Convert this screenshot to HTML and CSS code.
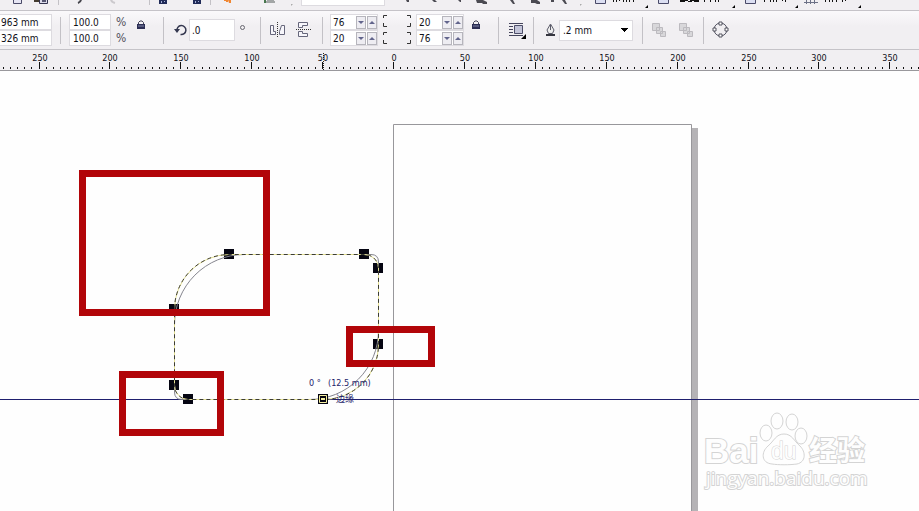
FILE: index.html
```html
<!DOCTYPE html>
<html lang="zh">
<head>
<meta charset="utf-8">
<title>Drawing</title>
<link rel="stylesheet" href="styles.css">
</head>
<body>
<div class="app">
  <div class="toolbar" role="toolbar" aria-label="Standard">
    <button aria-label="New"><svg width="12" height="10"><path d="M1.500-3V3.500H9.500V-3" fill="#e6e5f3" stroke="#4a4a68"/></svg></button>
    <button aria-label="Paste"><svg width="16" height="10"><path d="M0 0h6v2H0z" fill="#443c30"/><path d="M5.500-2V3.500H13.500V-2z" fill="#dcdbea" stroke="#353550"/><path d="M8 0h4v2H8z" fill="#555570"/></svg></button>
    <i class="rule"></i>
    <button aria-label="Undo"><svg width="12" height="10"><path d="M5-1Q5 2 2 3" fill="none" stroke="#45454c" stroke-width="2"/></svg></button>
    <button aria-label="Redo"><svg width="12" height="10"><path d="M2-1Q2 2 6 3" fill="none" stroke="#cbc9cd" stroke-width="2"/></svg></button>
    <i class="rule"></i>
    <button aria-label="Import"><svg width="10" height="10"><path d="M0 0h8v4H0z" fill="#202a58"/><path d="M2 1h1v2H2zM5 1h1v1H5z" fill="#a5b0d6"/></svg></button>
    <button aria-label="Export"><svg width="10" height="10"><path d="M0 0h8v4H0z" fill="#202a58"/><path d="M2 1h1v2H2zM5 1h1v1H5z" fill="#a5b0d6"/></svg></button>
    <i class="rule"></i>
    <button aria-label="Launch"><svg width="10" height="10"><path d="M1 0h4v2H3V1H1zM5 0h3v3H6z" fill="#f08632"/></svg></button>
    <button aria-label="Welcome"><svg width="30" height="10"><path d="M1 0h2v3H1z" fill="#47764d"/><path d="M3 2h9M4 0h7" stroke="#555d5a" fill="none"/><path d="M28 4h2l-2 2z" fill="#aaa"/></svg></button>
    <input class="zoom" aria-label="Zoom level">
    <button aria-label="Zoom in"><svg width="6" height="10"><path d="M1 0h3v2H2z" fill="#4b4a52"/></svg></button>
    <button aria-label="Zoom out"><svg width="6" height="10"><path d="M0 0h3l2 2H2z" fill="#4b4a52"/></svg></button>
    <button aria-label="Zoom selected"><svg width="6" height="10"><path d="M0 0h3v2H2z" fill="#4b4a52"/></svg></button>
    <button aria-label="Zoom objects"><svg width="13" height="10"><path d="M0 0h7l4 2v2H7L6 3H1z" fill="#4b4a52"/></svg></button>
    <button aria-label="Zoom page"><svg width="7" height="10"><path d="M0 0h3l2 4H3z" fill="#4b4a52"/></svg></button>
    <button aria-label="Zoom width"><svg width="24" height="10"><path d="M0 0h6l3 2v2H6L4 3H0zM20 0h3v2h-3z" fill="#4b4a52"/></svg></button>
    <button aria-label="Zoom height"><svg width="24" height="10"><path d="M0 0h3l2 4H3z" fill="#4b4a52"/><path d="M18 4h2l-2 2z" fill="#aaa"/></svg></button>
    <button aria-label="Snap to"><svg width="56" height="10"><path d="M.500-3V3.500H10.500V-3z" fill="#dcdff2" stroke="#4a4a68"/><path d="M18.500 0v2m3-2v2m3-2v1m4-1v2m3-2v2m3-2v2m4-2v2" stroke="#111" fill="none"/><path d="M53 5v3h-3z"/></svg></button>
    <button aria-label="Align"><svg width="80" height="10"><path d="M.500-3V3.500H10.500V-3z" fill="#dcdff2" stroke="#4a4a68"/><path d="M22 .500h8m2 0h9M22 1.500h5m3 0h4m2 0h5M46.500 0v2m6-2v2m5-2v2m3-2v2" stroke="#111" fill="none"/><path d="M77 5v3h-3z"/></svg></button>
    <button aria-label="Frame"><svg width="56" height="10"><path d="M.500-3V3.500H10.500V-3z" fill="#dcdff2" stroke="#4a4a68"/><path d="M19.500 0v2m6-2v2m3-2v2m3-2v2m6-2v1m3-1v2" stroke="#111" fill="none"/><path d="M53 5v3h-3z"/></svg></button>
    <button aria-label="Grid"><svg width="58" height="10"><path d="M0 2.500H14M2.500 0V4M6.500 0V4M10.500 0V4" fill="none" stroke="#6c7186"/><path d="M21.500 0v2m4-2v2m3-2v2m4-2v2m6-2v2m3-2v1" stroke="#111" fill="none"/><path d="M57 5v3h-3z"/></svg></button>
  </div>

  <div class="propbar" role="toolbar" aria-label="Properties">
    <div class="stack wide"><input aria-label="X position" value="963 mm"><input aria-label="Y position" value="326 mm"></div>
    <i class="rule"></i>
    <div class="stack scale"><input id="sx" value="100.0"><input id="sy" value="100.0"></div>
    <div class="stack units"><label for="sx">%</label><label for="sy">%</label></div>
    <button class="raised" aria-label="Lock ratio"><svg width="10" height="10"><path d="M2.500 5V2.500L4 1H6L7.500 2.500V5" fill="none" stroke="#414157"/><path d="M1 4h8v5H1z" fill="#2c2e55"/><path d="M2 6h6" stroke="#8186a9"/></svg></button>
    <i class="rule"></i>
    <svg width="13" height="14" aria-hidden="true"><path d="M3 8A4.500 4.500 0 1 1 6.500 11.500" fill="none" stroke="#34374f" stroke-width="1.500"/><path d="M0 6h6l-3 4z" fill="#34374f"/></svg>
    <input id="angle" class="angle" value=".0">
    <label for="angle" class="degree"><svg width="6" height="16" role="img" aria-label="degrees"><circle cx="2.500" cy="5.500" r="2" fill="none" stroke="#66666f"/></svg></label>
    <i class="rule"></i>
    <button aria-label="Mirror horizontally"><svg width="16" height="16"><path d="M.500 3.500H3.500V9.500H5.500V12.500H.500zM14.500 3.500H11.500L9.500 9.500V12.500H14.500z" fill="#f7f6fb" stroke="#66667b"/><path d="M7.500 0V16" stroke="#333" stroke-dasharray="1 1"/></svg></button>
    <button aria-label="Mirror vertically"><svg width="16" height="18"><path d="M2.500 6.500V1.500H11.500V4.500H6.500V6.500zM2.500 10.500V15.500H11.500V12.500H6.500V10.500z" fill="#f7f6fb" stroke="#66667b"/><path d="M0 8.500H16" stroke="#333" stroke-dasharray="1 1"/></svg></button>
    <i class="rule"></i>
    <div class="stack">
      <div class="spin"><input aria-label="Top left radius" value="76"><button aria-label="Decrease"></button><button class="up" aria-label="Increase"></button></div>
      <div class="spin"><input aria-label="Bottom left radius" value="20"><button aria-label="Decrease"></button><button class="up" aria-label="Increase"></button></div>
    </div>
    <svg width="29" height="32" aria-hidden="true"><path d="M4 1.500H.500V4M.500 9V12.500H4M24 1.500H27.500V4M27.500 9V12.500H24M4 18.500H.500V21M.500 26V29.500H4M24 18.500H27.500V21M27.500 26V29.500H24" fill="none" stroke="#333"/></svg>
    <div class="stack">
      <div class="spin"><input aria-label="Top right radius" value="20"><button aria-label="Decrease"></button><button class="up" aria-label="Increase"></button></div>
      <div class="spin"><input aria-label="Bottom right radius" value="76"><button aria-label="Decrease"></button><button class="up" aria-label="Increase"></button></div>
    </div>
    <button class="raised" aria-label="Edit corners together"><svg width="10" height="10"><path d="M2.500 5V2.500L4 1H6L7.500 2.500V5" fill="none" stroke="#414157"/><path d="M1 4h8v5H1z" fill="#2c2e55"/><path d="M2 6h6" stroke="#8186a9"/></svg></button>
    <i class="rule"></i>
    <button aria-label="Wrap text"><svg width="19" height="18"><path d="M1 2.500H15M1 5.500H5M1 8.500H5M1 11.500H5M1 14.500H15" stroke="#44445c"/><path d="M6.500 4.500H14.500V12.500H6.500z" fill="#c3c4d8" stroke="#4c4d68"/><path d="M18 13v5h-5z"/></svg></button>
    <i class="rule"></i>
    <svg width="9" height="14" aria-hidden="true"><path d="M4.500 1L1 7L2.500 10.500H6.500L8 7z" fill="#eee" stroke="#5b5b69"/><path d="M4.500 2V7" stroke="#5b5b69"/><path d="M0 11h9v2H0z" fill="#35353f"/></svg>
    <select class="outline" aria-label="Outline width"><option>.2 mm</option></select>
    <i class="rule"></i>
    <button aria-label="To front" disabled><svg width="16" height="15"><path d="M.500 .500H7.500V7.500H.500zM4.500 4.500H10.500V10.500H4.500zM8.500 8.500H13.500V13.500H8.500z" fill="#d8d7da" stroke="#bcbabf"/></svg></button>
    <button aria-label="To back" disabled><svg width="16" height="15"><path d="M.500 .500H7.500V7.500H.500zM8.500 8.500H13.500V13.500H8.500zM4.500 4.500H10.500V10.500H4.500z" fill="#d8d7da" stroke="#bcbabf"/></svg></button>
    <i class="rule"></i>
    <button aria-label="Convert to curves"><svg width="18" height="18"><circle cx="8.500" cy="8.500" r="6.500" fill="none" stroke="#5a5a68"/><path d="M7.500 1.500H10.500V4.500H7.500zM7.500 13.500H10.500V16.500H7.500zM1.500 7.500H4.500V10.500H1.500zM13.500 7.500H16.500V10.500H13.500z" transform="translate(-.500 -.500)" fill="#fff" stroke="#53535f"/></svg></button>
  </div>

  <svg class="ruler" id="ruler" role="img" aria-label="Horizontal ruler"><path id="ticks" stroke="#111" fill="none"/><path d="M323.500 3V20" stroke="#222" stroke-dasharray="1 1"/></svg>

  <main class="canvas">
    <svg class="drawing" role="img" aria-label="Drawing area">
      <g transform="translate(0 -71)">
        <path d="M692 128H698V2000H692z" fill="#b5b3b6"/>
        <path d="M393.500 2000V124.500H691.500V2000" fill="#fefefe" stroke="#98979b"/>
        <line x1="0" y1="399.500" x2="100%" y2="399.500" stroke="#1f1f6e"/>
        <path d="M224 249h10v10h-10zM359 249h10v10h-10zM373 263h10v10h-10zM373 339h10v10h-10zM169 304h10v10h-10zM169 380h10v10h-10zM183 394h10v10h-10z" fill="#050512"/>
        <path d="M174.500 325A70 70 0 0 1 244.500 254.500H371Q378.500 254.500 378.500 262V330A69 69 0 0 1 309 399.500H182Q174.500 399.500 174.500 392z" fill="none" stroke="#85858e"/>
        <path d="M174.500 309A55 55 0 0 1 229 254.500H364A14 14 0 0 1 378.500 268V344A55 55 0 0 1 323 399.500H188A14 14 0 0 1 174.500 385z" fill="none" stroke="#e6e294"/>
        <path d="M174.500 309A55 55 0 0 1 229 254.500H364A14 14 0 0 1 378.500 268V344A55 55 0 0 1 323 399.500H188A14 14 0 0 1 174.500 385z" fill="none" stroke="#3c3c34" stroke-dasharray="4 3"/>
        <path d="M318 394h10v10h-10z" fill="#050512"/>
        <path d="M319.500 395.500h7v7h-7z" fill="none" stroke="#f5efa0"/>
        <path d="M321 398h4v2h-4z" fill="#f5efa0"/>
        <text class="hint" x="309" y="386">0 °</text><text class="hint" x="328" y="386">(12.5 mm)</text>
        <text class="snap" x="336" y="402">边缘</text>
        <path d="M82.500 173.500H266.500V312.500H82.500zM349.500 329.500H431.500V363.500H349.500zM122.500 374.500H220.500V432.500H122.500z" fill="none" stroke="#b20509" stroke-width="7"/>
        <g class="mark">
          <text x="704" y="463" class="brand">Bai</text>
          <ellipse cx="766" cy="433" rx="6" ry="8"/><ellipse cx="777" cy="421" rx="6" ry="8"/><ellipse cx="792" cy="422" rx="6" ry="8"/><ellipse cx="801" cy="436" rx="6" ry="8"/>
          <path d="M784 434C776 434 774 441 768 446C761 452 761 463 772 464C778 465 790 465 797 464C806 462 806 452 800 446C794 441 792 434 784 434z"/>
          <text x="771" y="459" class="du">du</text>
          <text x="809" y="461" class="cjk">经验</text>
          <text x="706" y="485" class="site">jingyan.baidu.com</text>
        </g>
      </g>
    </svg>
  </main>
</div>
<script src="ruler.js"></script>
</body>
</html>
```
FILE: styles.css
```css
* { box-sizing: border-box; }

html, body { height: 100%; margin: 0; }

body, input, select, button {
  font-family: "DejaVu Sans Condensed", "DejaVu Sans", sans-serif;
  font-size: 10px;
  color: #101018;
}

.app {
  display: flex;
  flex-direction: column;
  height: 100%;
  overflow: hidden;
  background: #f1eff2;
}

button {
  display: block;
  padding: 0;
  border: 0;
  background: none;
}

svg { display: block; }

input {
  min-width: 0;
  border: 1px solid #dddbe0;
  background: #fff;
  padding: 0 3px;
  border-radius: 0;
}

.rule { width: 1px; height: 27px; background: #c3c1c6; }

.toolbar {
  display: grid;
  flex: none;
  grid-template-columns: 22px 24px 18px 33px 40px 10px 34px 17px 13px 40px 38px 104px 27px 26px 18px 34px 21px 31px 33px 63px 87px 59px auto;
  justify-items: start;
  height: 10px;
  padding-left: 12px;
  overflow: hidden;
}
.toolbar .rule { height: 5px; }
.toolbar .zoom { width: 84px; height: 6px; border-top: 0; }

.propbar {
  display: grid;
  flex: none;
  grid-template-columns: 60px 9px 47px 20px 27px 11px 15px 51px 20px 10px 26px 26px 8px 53px 33px 55px 27px 10px 25px 13px 13px 83px 10px 27px 24px 9px auto;
  align-items: center;
  justify-items: start;
  height: 40px;
  border-top: 1px solid #c5c3c8;
  border-bottom: 1px solid #c5c3c8;
  background: linear-gradient(#faf9fb, #f1eff2 40%);
}

.stack { display: grid; grid-auto-rows: 16px; }
.stack > input { height: 16px; }
.wide input { width: 52px; padding: 0 1px; border-left: 0; }
.scale input { width: 42px; }
.units { align-items: center; color: #50505c; font-size: 12px; }
.raised { padding-bottom: 11px; }
.angle { width: 46px; height: 22px; padding: 0 2px; }

.spin {
  display: flex;
  align-items: center;
  gap: 1px;
  width: 48px;
  height: 16px;
  border: 1px solid #dddbe0;
  background: #fff;
}
.spin input { width: 25px; border: 0; padding: 0 2px; }
.spin button {
  display: flex;
  align-items: center;
  justify-content: center;
  width: 10px;
  height: 13px;
  border: 1px solid #b6b5bc;
  background: #eeedf2;
}
.spin button::before {
  content: "";
  border: 3px solid transparent;
  border-top: 3px solid #62658c;
  border-bottom: 0;
}
.spin .up::before {
  border-top: 0;
  border-bottom: 3px solid #62658c;
}

.outline {
  width: 74px;
  height: 21px;
  padding: 0 3px;
  border: 1px solid #dddbe0;
  border-radius: 0;
  appearance: none;
  background:
    linear-gradient(to bottom right, #000 50%, transparent 50%) right 3px center / 4px 4px no-repeat,
    linear-gradient(to bottom left, #000 50%, transparent 50%) right 7px center / 4px 4px no-repeat,
    #fff;
}

.ruler {
  flex: none;
  width: 100%;
  height: 21px;
  border-bottom: 1px solid #99989c;
}
.ruler text { font-size: 9px; fill: #101018; text-anchor: middle; }

.canvas { flex: 1; min-height: 0; background: #fefefe; }
.drawing { width: 100%; height: 100%; }

.hint { font-size: 9px; fill: #23236a; }
.snap { font: 9px "Noto Sans CJK SC", sans-serif; fill: #23236a; }

.mark {
  fill: #fefefe;
  stroke: #d4d4d4;
  stroke-width: 1px;
}
.mark text { paint-order: stroke; stroke-width: 2px; }
.brand { font: bold 35px "Liberation Sans", sans-serif; }
.mark .du { font: 23px "Liberation Sans", sans-serif; stroke-width: 1px; }
.cjk { font: bold 28px "Noto Sans CJK SC", sans-serif; }
.site { font: 19px "Open Sans", sans-serif; }
```
FILE: ruler.js
```js
// Draws a tick every 5 units and a label every 50 units.
const ruler = document.getElementById("ruler");
const origin = 393;
const scale = 1.418;
let path = "";
for (let unit = -275; unit * scale + origin < window.innerWidth + 20; unit += 5) {
  const x = Math.round(origin + unit * scale);
  const major = unit % 50 === 0;
  path += `M${x + 0.5} ${major ? 12 : 17}V19`;
  if (major) {
    const label = document.createElementNS("http://www.w3.org/2000/svg", "text");
    label.setAttribute("x", x + 1);
    label.setAttribute("y", 11);
    label.textContent = Math.abs(unit);
    ruler.append(label);
  }
}
document.getElementById("ticks").setAttribute("d", path);
```
